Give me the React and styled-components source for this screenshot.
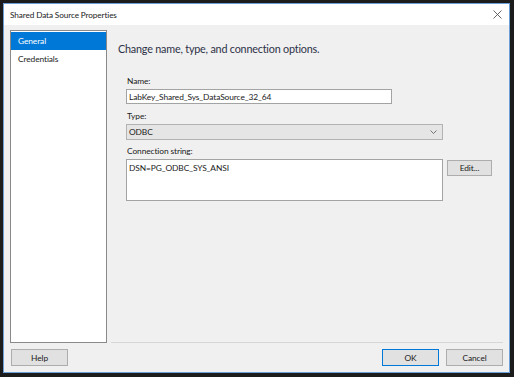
import React from "react";
import styled, { createGlobalStyle } from "styled-components";

const GlobalStyle = createGlobalStyle`
  html, body {
    margin: 0;
    padding: 0;
    background: #1c1c1c;
  }
  body {
    font-family: Lato, "Liberation Sans", sans-serif;
    letter-spacing: -0.1px;
  }
`;

const Frame = styled.div`
  padding: 3px 4px 4px 3px;
  width: 514px;
  height: 377px;
  box-sizing: border-box;
`;

const Window = styled.div`
  width: 507px;
  height: 370px;
  box-sizing: border-box;
  border: 1px solid #6a9fd8;
  background: #f0f0f0;
  display: flex;
  flex-direction: column;
`;

const TitleBar = styled.div`
  height: 21px;
  background: #ffffff;
  display: flex;
  align-items: center;
  justify-content: space-between;
  padding: 0 7px 0 6px;
  font-size: 8.2px;
  color: #222;
`;

const CloseIcon = styled.svg`
  width: 9px;
  height: 9px;
`;

const Main = styled.div`
  flex: 1;
  display: flex;
  flex-direction: column;
  padding: 5px 6px 6px 6px;
`;

const TopRow = styled.div`
  flex: 1;
  display: flex;
`;

const Sidebar = styled.div`
  width: 97px;
  box-sizing: border-box;
  background: #ffffff;
  border: 1px solid #8a8a8a;
  padding-top: 1px;
  display: flex;
  flex-direction: column;
`;

const NavItem = styled.div`
  height: 18px;
  display: flex;
  align-items: center;
  padding-left: 7px;
  font-size: 8.4px;
  color: ${(p) => (p.$active ? "#ffffff" : "#222")};
  background: ${(p) => (p.$active ? "#0078d7" : "transparent")};
`;

const Content = styled.div`
  flex: 1;
  margin-left: 4px;
  border-bottom: 1px solid #d7d7d7;
  display: flex;
  flex-direction: column;
  padding-left: 15px;
`;

const Heading = styled.div`
  margin: 12px 0 0 -8px;
  font-size: 10.8px;
  letter-spacing: -0.2px;
  line-height: 14px;
  color: #2d3047;
`;

const Label = styled.div`
  font-size: 8.4px;
  line-height: 12px;
  color: #1a1a1a;
  margin: ${(p) => p.$top}px 0 2px 1px;
`;

const TextInput = styled.div`
  width: 266px;
  height: 15px;
  box-sizing: border-box;
  border: 1px solid #a3a3a3;
  background: #ffffff;
  font-size: 8.4px;
  display: flex;
  align-items: center;
  padding-left: 2px;
  color: #1a1a1a;
`;

const Select = styled.div`
  width: 317px;
  height: 16px;
  box-sizing: border-box;
  border: 1px solid #b3b3b3;
  background: #e5e5e5;
  font-size: 8.4px;
  display: flex;
  align-items: center;
  justify-content: space-between;
  padding: 0 5px 0 2px;
  color: #1a1a1a;
`;

const Chevron = styled.svg`
  width: 7px;
  height: 4px;
`;

const ConnRow = styled.div`
  display: flex;
  align-items: flex-start;
  gap: 4px;
`;

const TextArea = styled.div`
  width: 317px;
  height: 42px;
  box-sizing: border-box;
  border: 1px solid #a3a3a3;
  background: #ffffff;
  font-size: 8.4px;
  line-height: 12px;
  padding: 2px 2px;
  color: #1a1a1a;
`;

const Button = styled.div`
  width: ${(p) => p.$w || 57}px;
  height: ${(p) => p.$h || 17}px;
  box-sizing: border-box;
  border: 1px solid ${(p) => (p.$primary ? "#0078d7" : "#adadad")};
  background: #e1e1e1;
  font-size: 8.4px;
  color: #1a1a1a;
  display: flex;
  align-items: center;
  justify-content: center;
  margin-top: ${(p) => p.$mt || 0}px;
`;

const Footer = styled.div`
  display: flex;
  align-items: center;
  padding: 6px 0 0 1px;
  gap: 7px;
`;

const Spacer = styled.div`
  flex: 1;
`;

export default function App() {
  return (
    <>
      <GlobalStyle />
      <Frame>
        <Window>
          <TitleBar>
            <span>Shared Data Source Properties</span>
            <CloseIcon viewBox="0 0 9 9">
              <path d="M0.5 0.5 L8.5 8.5 M8.5 0.5 L0.5 8.5" stroke="#555" strokeWidth="0.9" />
            </CloseIcon>
          </TitleBar>
          <Main>
            <TopRow>
              <Sidebar>
                <NavItem $active>General</NavItem>
                <NavItem>Credentials</NavItem>
              </Sidebar>
              <Content>
                <Heading>Change name, type, and connection options.</Heading>
                <Label $top={19}>Name:</Label>
                <TextInput>LabKey_Shared_Sys_DataSource_32_64</TextInput>
                <Label $top={6}>Type:</Label>
                <Select>
                  <span>ODBC</span>
                  <Chevron viewBox="0 0 7 4">
                    <path d="M0.5 0.5 L3.5 3.5 L6.5 0.5" fill="none" stroke="#666" strokeWidth="0.9" />
                  </Chevron>
                </Select>
                <Label $top={5}>Connection string:</Label>
                <ConnRow>
                  <TextArea>DSN=PG_ODBC_SYS_ANSI</TextArea>
                  <Button $w={45} $h={16} $mt={1}>Edit...</Button>
                </ConnRow>
              </Content>
            </TopRow>
            <Footer>
              <Button>Help</Button>
              <Spacer />
              <Button $primary>OK</Button>
              <Button>Cancel</Button>
            </Footer>
          </Main>
        </Window>
      </Frame>
    </>
  );
}
